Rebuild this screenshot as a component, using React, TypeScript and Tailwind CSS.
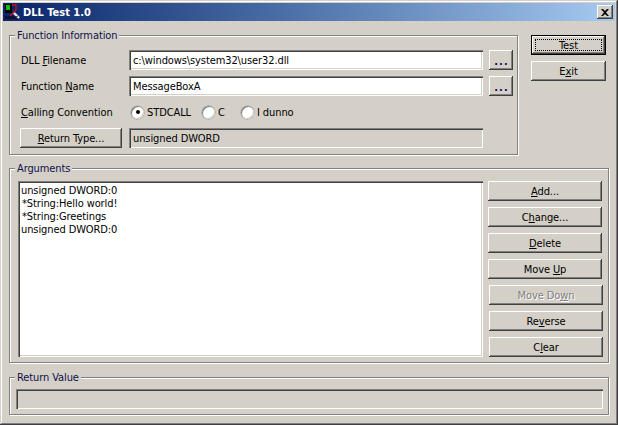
const raised =
  "shadow-[inset_-1px_-1px_0_#404040,inset_1px_1px_0_#ffffff,inset_-2px_-2px_0_#808080]";
const sunken =
  "shadow-[inset_1px_1px_0_#808080,inset_2px_2px_0_#404040,inset_-1px_-1px_0_#ffffff,inset_-2px_-2px_0_#d4d0c8]";
const etched =
  "relative border border-[#808080] shadow-[1px_1px_0_#ffffff,inset_1px_1px_0_#ffffff]";

function U({ children }: { children: string }) {
  return <span className="underline underline-offset-1">{children}</span>;
}

function Btn({
  className = "",
  disabled = false,
  children,
}: {
  className?: string;
  disabled?: boolean;
  children: React.ReactNode;
}) {
  return (
    <button
      className={`flex h-5 items-center justify-center bg-[#d4d0c8] ${raised} ${
        disabled ? "text-[#808080] [text-shadow:1px_1px_0_#ffffff]" : "text-black"
      } ${className}`}
    >
      {children}
    </button>
  );
}

function Group({
  title,
  className = "",
  children,
}: {
  title: string;
  className?: string;
  children: React.ReactNode;
}) {
  return (
    <div className={`${etched} ${className}`}>
      {/* caption sits on the etched line */}
      <span className="absolute top-[-7px] left-[5px] bg-[#d4d0c8] px-[2px] leading-[13px] text-[#10104a]">
        {title}
      </span>
      {children}
    </div>
  );
}

function Radio({ checked = false, label, className = "" }: { checked?: boolean; label: string; className?: string }) {
  return (
    <div className={`flex items-center ${className}`}>
      <span className="flex h-[13px] w-[13px] items-center justify-center rounded-full bg-white shadow-[inset_1px_1px_0_#808080,inset_-1px_-1px_0_#d4d0c8,0_0_0_0.5px_#9a9a94]">
        {checked && <span className="h-1 w-1 rounded-full bg-black" />}
      </span>
      <span className="ml-[3px]">{label}</span>
    </div>
  );
}

function AppIcon() {
  return (
    <svg width="16" height="16" viewBox="0 0 16 16" className="shrink-0">
      <rect x="0" y="0" width="7" height="9" fill="#000000" />
      <rect x="1" y="1" width="4" height="5" fill="#00c800" />
      <path d="M7 1h4v5l-6 6" fill="none" stroke="#d01010" strokeWidth="1.3" />
      <path d="M0 12h13v3H0z" fill="#101030" />
      <path d="M9 9l5 5" stroke="#e8e8e8" strokeWidth="2.4" />
      <path d="M11 13l2-1" stroke="#303030" strokeWidth="1" />
    </svg>
  );
}

function Dots() {
  return <span className="pt-[3px] pl-px font-bold tracking-[1px] text-[#200060]">...</span>;
}

export default function App() {
  return (
    <div
      className={`flex h-[425px] w-[618px] flex-col overflow-hidden bg-[#d4d0c8] p-[3px] font-['DejaVu_Sans_Condensed','DejaVu_Sans',sans-serif] text-[11px] leading-[13px] tracking-[-0.1px] text-black shadow-[inset_-1px_-1px_0_#404040,inset_1px_1px_0_#d4d0c8,inset_-2px_-2px_0_#808080,inset_2px_2px_0_#ffffff]`}
    >
      {/* Title bar */}
      <div className="flex h-[18px] items-center bg-gradient-to-r from-[#0a246a] to-[#a6caf0] pr-[2px] pl-[2px]">
        <AppIcon />
        <span className="ml-[2px] text-[11px] font-bold tracking-normal text-white">DLL Test 1.0</span>
        <button
          className={`ml-auto flex h-[14px] w-[16px] items-center justify-center bg-[#d4d0c8] ${raised}`}
        >
          <svg width="8" height="7" viewBox="0 0 8 7">
            <path d="M0 0l2 0 2 2 2-2 2 0-3 3.5 3 3.5-2 0-2-2-2 2-2 0 3-3.5z" fill="#000000" />
          </svg>
        </button>
      </div>

      <div className="flex flex-col pt-[14px] pl-[6px]">
        <div className="flex">
          {/* Function Information */}
          <Group title="Function Information" className="h-[120px] w-[509px]">
            <div className="flex flex-col gap-[6px] pt-[14px] pl-[10px]">
              <div className="flex items-center">
                <span className="w-[109px] pl-px">
                  DLL <U>F</U>ilename
                </span>
                <div className={`flex h-5 w-[354px] items-center bg-white pl-[4px] ${sunken}`}>
                  c:\windows\system32\user32.dll
                </div>
                <Btn className="ml-[6px] w-6">
                  <Dots />
                </Btn>
              </div>
              <div className="flex items-center">
                <span className="w-[109px] pl-px">
                  Function <U>N</U>ame
                </span>
                <div className={`flex h-5 w-[354px] items-center bg-white pl-[4px] ${sunken}`}>
                  MessageBoxA
                </div>
                <Btn className="ml-[6px] w-6">
                  <Dots />
                </Btn>
              </div>
              <div className="flex h-5 items-center">
                <span className="w-[111px] pl-px">
                  <U>C</U>alling Convention
                </span>
                <Radio checked label="STDCALL" className="w-[71px]" />
                <Radio label="C" className="w-[39px]" />
                <Radio label="I dunno" />
              </div>
              <div className="flex items-center">
                <Btn className="w-[102px]">
                  <span>
                    <U>R</U>eturn Type...
                  </span>
                </Btn>
                <div className={`ml-[7px] flex h-5 w-[354px] items-center pl-[4px] ${sunken}`}>
                  unsigned DWORD
                </div>
              </div>
            </div>
          </Group>

          <div className="ml-[13px] flex w-[75px] flex-col gap-[6px]">
            <button
              className={`relative flex h-5 items-center justify-center bg-[#d4d0c8] outline outline-1 -outline-offset-1 outline-black shadow-[inset_-2px_-2px_0_#404040,inset_2px_2px_0_#ffffff,inset_-3px_-3px_0_#808080]`}
            >
              {/* focus rectangle */}
              <span className="absolute inset-[4px] border border-dotted border-black" />
              Test
            </button>
            <Btn>
              <span>
                E<U>x</U>it
              </span>
            </Btn>
          </div>
        </div>

        {/* Arguments */}
        <Group title="Arguments" className="mt-[13px] h-[195px] w-[600px]">
          <div className="flex pt-[12px] pl-[8px]">
            <div className={`h-[176px] w-[465px] bg-white pt-[3px] pl-[3px] ${sunken}`}>
              <div>unsigned DWORD:0</div>
              <div className="pl-px">*String:Hello world!</div>
              <div className="pl-px">*String:Greetings</div>
              <div>unsigned DWORD:0</div>
            </div>
            <div className="ml-[5px] flex w-[115px] flex-col gap-[6px]">
              <Btn className="w-[114px]">
                <span>
                  <U>A</U>dd...
                </span>
              </Btn>
              <Btn className="w-[114px]">
                <span>
                  C<U>h</U>ange...
                </span>
              </Btn>
              <Btn className="w-[114px]">
                <span>
                  <U>D</U>elete
                </span>
              </Btn>
              <Btn className="w-[114px]">
                <span>
                  Move <U>U</U>p
                </span>
              </Btn>
              <Btn disabled className="ml-px w-[114px]">
                <span>
                  Move Do<U>w</U>n
                </span>
              </Btn>
              <Btn className="ml-px w-[114px]">
                <span>
                  Re<U>v</U>erse
                </span>
              </Btn>
              <Btn className="ml-px w-[114px]">
                <span>
                  C<U>l</U>ear
                </span>
              </Btn>
            </div>
          </div>
        </Group>

        {/* Return Value */}
        <Group title="Return Value" className="mt-[14px] h-[38px] w-[600px]">
          <div className="pt-[11px] pl-[6px]">
            <div className={`h-5 w-[587px] ${sunken}`} />
          </div>
        </Group>
      </div>
    </div>
  );
}
